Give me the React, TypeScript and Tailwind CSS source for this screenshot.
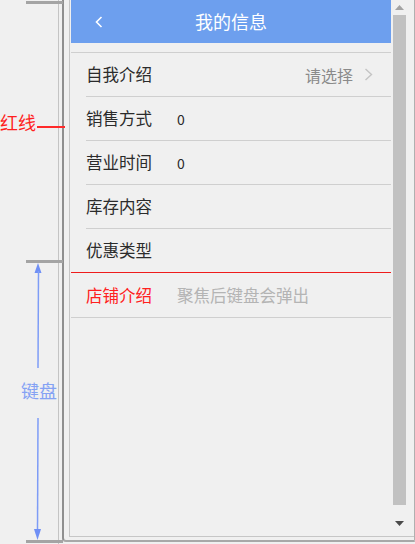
import React from "react";

interface Row {
  label: string;
  value?: string;
  select?: boolean;
}

const rows: Row[] = [
  { label: "自我介绍", select: true },
  { label: "销售方式", value: "0" },
  { label: "营业时间", value: "0" },
  { label: "库存内容" },
  { label: "优惠类型" },
];

function Annotations() {
  return (
    <div className="relative w-[59px] h-full border-r border-[#c4c4c4] shrink-0">
      {/* top marker */}
      <div className="absolute left-[26px] top-[1px] w-[37px] h-[3px] bg-[#a4a4a4]" />

      {/* red line label */}
      <div className="absolute left-0 top-[110px] text-[18px] leading-[24px] text-[#ff1f1f]">
        红线
      </div>
      <div className="absolute left-[37px] top-[126px] w-[28px] h-[2px] bg-[#ff2a2a]" />

      {/* keyboard marker */}
      <div className="absolute left-[26px] top-[260px] w-[37px] h-[3px] bg-[#a4a4a4]" />
      <svg
        className="absolute left-[32px] top-[263px]"
        width="12"
        height="280"
        viewBox="0 0 12 280"
      >
        <path d="M6 0 L2.5 10 L9.5 10 Z" fill="#6f8ff5" />
        <line x1="6.5" y1="8" x2="6" y2="105" stroke="#7e9cf6" strokeWidth="1.5" />
        <line x1="6" y1="155" x2="5.5" y2="268" stroke="#7e9cf6" strokeWidth="1.5" />
        <path d="M5.5 277 L2 266 L9 266 Z" fill="#6f8ff5" />
      </svg>
      <div className="absolute left-[21px] top-[378px] text-[18px] leading-[24px] text-[#84a2f4]">
        键盘
      </div>
      <div className="absolute left-[26px] top-[540px] w-[37px] h-[3px] bg-[#a4a4a4]" />
    </div>
  );
}

function Chevron({ color }: { color: string }) {
  return (
    <svg width="9" height="13" viewBox="0 0 9 13">
      <polyline
        points="1.5,1 7.5,6.5 1.5,12"
        fill="none"
        stroke={color}
        strokeWidth="1.4"
      />
    </svg>
  );
}

function Scrollbar() {
  return (
    <div className="w-[14px] flex flex-col items-center shrink-0">
      <svg className="mt-[5px]" width="9" height="5" viewBox="0 0 9 5">
        <path d="M4.5 0 L9 5 L0 5 Z" fill="#a3a3a3" />
      </svg>
      <div className="mt-[5px] w-[13px] h-[490px] bg-[#c1c1c1]" />
      <div className="flex-1" />
      <svg className="mb-[10px]" width="9" height="5" viewBox="0 0 9 5">
        <path d="M0 0 L9 0 L4.5 5 Z" fill="#4a4a4a" />
      </svg>
    </div>
  );
}

export default function App() {
  return (
    <div className="w-[415px] h-[544px] bg-[#f0f0f0] flex overflow-hidden font-['Noto_Sans_CJK_SC',sans-serif]">
      <Annotations />

      {/* device frame */}
      <div className="w-[353px] h-[542px] ml-[3px] border-l-2 border-b-2 border-r border-l-[#8f8f8f] border-b-[#a8a8a8] border-r-[#b0b0b0] rounded-bl-[4px] pl-[5px] pb-[3px] flex">
        <div className="flex-1 flex border-l border-b border-[#c6c6c6] pl-[1px]">
          {/* screen */}
          <div className="w-[320px] flex flex-col">
            <div className="h-[43px] bg-[#6d9fee] grid grid-cols-[60px_1fr_60px] items-center text-white">
              <div className="pl-[24px] flex items-center">
                <svg width="8" height="12" viewBox="0 0 8 12">
                  <polyline
                    points="6.5,1 1.5,6 6.5,11"
                    fill="none"
                    stroke="#ffffff"
                    strokeWidth="1.6"
                  />
                </svg>
              </div>
              <div className="text-center text-[18px]">我的信息</div>
              <div />
            </div>

            <div className="mt-[9px] h-px bg-[#cfcfcf]" />

            {rows.map((row, i) => (
              <div key={row.label}>
                <div className="h-[43px] flex items-center pl-[15px] pr-[18px]">
                  <div className="w-[91px] text-[16.5px] text-[#2b2b2b]">{row.label}</div>
                  {row.value && (
                    <div className="text-[14px] text-[#2b2b2b] mt-[2px]">{row.value}</div>
                  )}
                  {row.select && (
                    <div className="ml-auto flex items-center gap-[11px] text-[16px] text-[#8a8a8a]">
                      请选择
                      <Chevron color="#c4c4c4" />
                    </div>
                  )}
                </div>
                {i < rows.length - 1 ? (
                  <div className="ml-[15px] h-px bg-[#cfcfcf]" />
                ) : (
                  <div className="h-px bg-[#ee1c1c]" />
                )}
              </div>
            ))}

            <div className="h-[44px] flex items-center pl-[15px]">
              <div className="w-[91px] text-[16.5px] text-[#ff2020]">店铺介绍</div>
              <div className="text-[16.5px] text-[#b4b4b4]">聚焦后键盘会弹出</div>
            </div>
            <div className="h-px bg-[#cfcfcf]" />
          </div>

          <div className="w-[1px]" />
          <Scrollbar />
        </div>
      </div>
    </div>
  );
}
